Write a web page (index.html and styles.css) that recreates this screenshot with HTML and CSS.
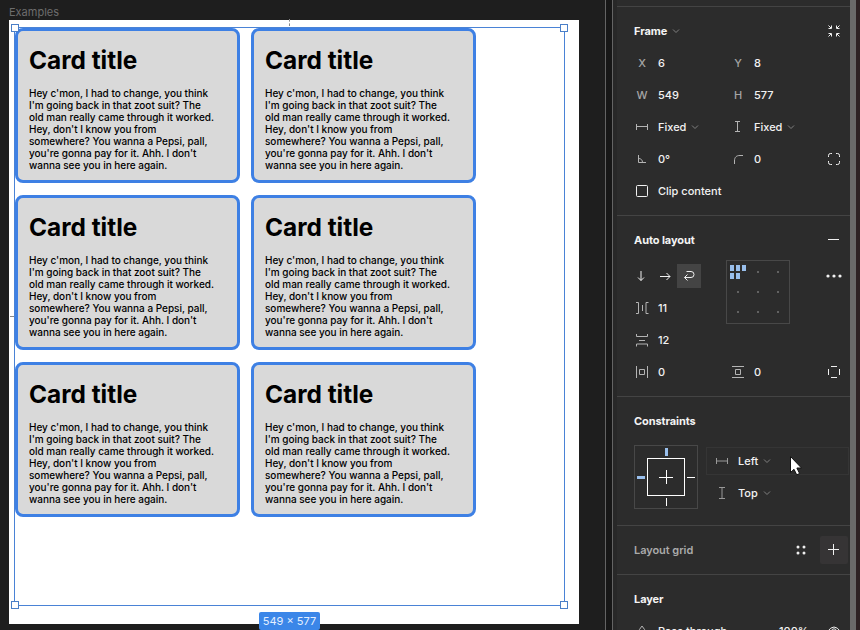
FILE: index.html
```html
<!DOCTYPE html>
<html lang="en">
<head>
<meta charset="utf-8">
<title>Examples</title>
<link rel="stylesheet" href="styles.css">
</head>
<body>
<div class="app">
  <main class="canvas">
    <div class="canvas-label">Examples</div>
    <div class="artboard">
      <div class="frame" id="frame">
        <article class="card"><h2>Card title</h2><p>Hey c'mon, I had to change, you think<br>I'm going back in that zoot suit? The<br>old man really came through it worked.<br>Hey, don't I know you from<br>somewhere? You wanna a Pepsi, pall,<br>you're gonna pay for it. Ahh. I don't<br>wanna see you in here again.</p></article>
        <article class="card"><h2>Card title</h2><p>Hey c'mon, I had to change, you think<br>I'm going back in that zoot suit? The<br>old man really came through it worked.<br>Hey, don't I know you from<br>somewhere? You wanna a Pepsi, pall,<br>you're gonna pay for it. Ahh. I don't<br>wanna see you in here again.</p></article>
        <article class="card"><h2>Card title</h2><p>Hey c'mon, I had to change, you think<br>I'm going back in that zoot suit? The<br>old man really came through it worked.<br>Hey, don't I know you from<br>somewhere? You wanna a Pepsi, pall,<br>you're gonna pay for it. Ahh. I don't<br>wanna see you in here again.</p></article>
        <article class="card"><h2>Card title</h2><p>Hey c'mon, I had to change, you think<br>I'm going back in that zoot suit? The<br>old man really came through it worked.<br>Hey, don't I know you from<br>somewhere? You wanna a Pepsi, pall,<br>you're gonna pay for it. Ahh. I don't<br>wanna see you in here again.</p></article>
        <article class="card"><h2>Card title</h2><p>Hey c'mon, I had to change, you think<br>I'm going back in that zoot suit? The<br>old man really came through it worked.<br>Hey, don't I know you from<br>somewhere? You wanna a Pepsi, pall,<br>you're gonna pay for it. Ahh. I don't<br>wanna see you in here again.</p></article>
        <article class="card"><h2>Card title</h2><p>Hey c'mon, I had to change, you think<br>I'm going back in that zoot suit? The<br>old man really came through it worked.<br>Hey, don't I know you from<br>somewhere? You wanna a Pepsi, pall,<br>you're gonna pay for it. Ahh. I don't<br>wanna see you in here again.</p></article>
        <div class="selection">
          <i class="handle tl"></i><i class="handle tr"></i><i class="handle bl"></i><i class="handle br"></i>
          <span class="size-tag">549 × 577</span>
        </div>
        <i class="guide-top"></i>
        <i class="guide-left"></i>
      </div>
    </div>
  </main>
  <div class="gutter"></div>
  <aside class="panel">
    <div class="panel-top"></div>
    <section>
      <div class="row head">
        <h3>Frame <svg class="chev" width="8" height="6"><path d="M1 1.5l3 3 3-3"/></svg></h3>
        <svg class="icon bright end" width="16" height="16"><path d="M2.500 2.500l2.500 2.500M5.500 2.500v3H2.500M13.500 2.500l-2.500 2.500M10.500 2.500v3H13.500M2.500 13.500l2.500-2.500M5.500 13.500v-3H2.500M13.500 13.500l-2.500-2.500M10.500 13.500v-3H13.500"/></svg>
      </div>
      <div class="row"><div class="cell"><b>X</b><span>6</span></div><div class="cell"><b>Y</b><span>8</span></div></div>
      <div class="row"><div class="cell"><b>W</b><span>549</span></div><div class="cell"><b>H</b><span>577</span></div></div>
      <div class="row">
        <div class="cell"><svg class="icon" width="16" height="16"><path d="M2.500 5v6M13.500 5v6M3 7.500h10"/></svg><span>Fixed</span><svg class="chev" width="8" height="6"><path d="M1 1.500l3 3 3-3"/></svg></div>
        <div class="cell"><svg class="icon" width="16" height="16"><path d="M5 2.500h5M5 12.500h5M7.500 3v10"/></svg><span>Fixed</span><svg class="chev" width="8" height="6"><path d="M1 1.500l3 3 3-3"/></svg></div>
      </div>
      <div class="row">
        <div class="cell"><svg class="icon" width="16" height="16"><path d="M4.500 4v7.500h7.500M4.500 7.500c2.500 0 4 1.500 4 4"/></svg><span>0°</span></div>
        <div class="cell"><svg class="icon" width="16" height="16"><path d="M4.500 13v-3c0-4 2-5.500 5.500-5.500h3"/></svg><span>0</span></div>
        <svg class="icon bright end" width="16" height="16"><path d="M2.500 6V4.500q0-2 2-2H6M10 2.500h1.500q2 0 2 2V6M13.500 10v1.500q0 2-2 2H10M6 13.500H4.500q-2 0-2-2V10"/></svg>
      </div>
      <div class="row"><label class="cell wide"><svg class="icon bright" width="16" height="16"><rect x="2.500" y="2.500" width="11" height="11" rx="1"/></svg><span>Clip content</span></label></div>
    </section>

    <section class="auto">
      <div class="row head"><h3>Auto layout</h3><svg class="icon bright end" width="16" height="16"><path d="M2 7.500h11"/></svg></div>
      <div class="auto-body">
        <div class="auto-left">
          <div class="direction">
            <button><svg class="icon bright" width="16" height="16"><path d="M8 3v9.500M5 9.500l3 3 3-3"/></svg></button>
            <button><svg class="icon bright" width="16" height="16"><path d="M3 8.500h10M9.500 5l3.500 3.500L9.500 12"/></svg></button>
            <button class="on"><svg class="icon bright" width="16" height="16"><path d="M5.500 3.500h4.500a3 3 0 0 1 0 6H3.500M6.500 6.500l-3 3 3 3"/></svg></button>
          </div>
          <div class="row"><div class="cell"><svg class="icon" width="16" height="16"><path d="M2 2.500h2.500v11H2M14.500 2.500H12v11h2.500M8.500 5v6"/></svg><span>11</span></div></div>
          <div class="row"><div class="cell"><svg class="icon" width="16" height="16"><path d="M2.500 2v2.500h11V2M2.500 14.500v-2.500h11v2.500M5 8.500h6"/></svg><span>12</span></div></div>
        </div>
        <svg class="align-box" width="64" height="64">
          <rect class="outline" x=".5" y=".5" width="63" height="63"/>
          <path class="blocks" d="M4 5h4v6h-4zM10 5h4v6h-4zM16 5h4v6h-4zM4 13h4v6h-4zM10 13h4v6h-4z"/>
          <path class="dots" d="M31 11h2v2h-2zM51 11h2v2h-2zM11 31h2v2h-2zM31 31h2v2h-2zM51 31h2v2h-2zM11 51h2v2h-2zM31 51h2v2h-2zM51 51h2v2h-2z"/>
        </svg>
        <svg class="icon more" width="16" height="16"><circle cx="2" cy="8" r="1.600"/><circle cx="8" cy="8" r="1.600"/><circle cx="14" cy="8" r="1.600"/></svg>
      </div>
      <div class="row">
        <div class="cell"><svg class="icon" width="16" height="16"><path d="M2.500 2v12M13.500 2v12M5.500 5.500h5v5h-5z"/></svg><span>0</span></div>
        <div class="cell"><svg class="icon" width="16" height="16"><path d="M2 2.500h12M2 13.500h12M5.500 5.500h5v5h-5z"/></svg><span>0</span></div>
        <svg class="icon bright end" width="16" height="16"><path d="M5 2.500h6M5 13.500h6M2.500 5v6M13.500 5v6"/></svg>
      </div>
    </section>

    <section class="constraints">
      <div class="row head"><h3>Constraints</h3></div>
      <div class="constraint-body">
        <svg class="pin-box" width="64" height="64">
          <rect class="outline" x=".5" y=".5" width="63" height="63"/>
          <rect class="line" x="13.500" y="13.500" width="37" height="37"/>
          <path class="line" d="M25 32.500h14M32.500 25v14M53 32.500h8M32.500 53v8"/>
          <path class="blocks" d="M31 3h3v8h-3zM3 31h8v3H3z"/>
        </svg>
        <div class="selects">
          <div class="field boxed"><svg class="icon dim" width="16" height="16"><path d="M2.500 5v6M13.500 5v6M3 8h10"/></svg><span>Left</span><svg class="chev" width="8" height="6"><path d="M1 1.500l3 3 3-3"/></svg></div>
          <div class="field"><svg class="icon dim" width="16" height="16"><path d="M5 2.500h6M5 13.500h6M8 3v10"/></svg><span>Top</span><svg class="chev" width="8" height="6"><path d="M1 1.500l3 3 3-3"/></svg></div>
        </div>
      </div>
    </section>

    <section class="grid-section">
      <div class="row head"><h3 class="muted">Layout grid</h3>
        <svg class="icon four" width="16" height="16"><circle cx="5" cy="5" r="1.500"/><circle cx="11" cy="5" r="1.500"/><circle cx="5" cy="11" r="1.500"/><circle cx="11" cy="11" r="1.500"/></svg>
        <button class="add"><svg class="icon bright" width="16" height="16"><path d="M2 7.500h11M7.500 2v11"/></svg></button>
      </div>
    </section>

    <section class="layer">
      <div class="row head"><h3>Layer</h3></div>
      <div class="row">
        <div class="cell through"><svg class="icon" width="16" height="16"><path d="M8 3Q4.500 7 4.500 9.500a3.500 3.500 0 0 0 7 0Q11.500 7 8 3z"/></svg><span>Pass through</span></div>
        <span class="opacity">100%</span>
        <svg class="icon bright end" width="16" height="16"><path d="M1.500 8.500q6.500-9 13 0q-6.500 9-13 0z"/><circle cx="8" cy="8" r="2.200"/></svg>
      </div>
    </section>
  </aside>
  <div class="scrollbar"></div>
  <svg class="cursor" width="14" height="22"><path d="M1.500 1.500v16l3.500-3.200 2.700 5.500 2.900-1.300-2.700-5.500h4.600z"/></svg>
</div>
</body>
</html>
```

FILE: styles.css
```css
* { box-sizing: border-box; }
body { margin: 0; font-family: Inter, "Liberation Sans", sans-serif; background: #1e1e1e; }
h2, h3, p { margin: 0; }
button { border: 0; padding: 0; background: none; display: flex; align-items: center; justify-content: center; }
svg { display: block; flex: none; }

.app { position: relative; width: 860px; height: 630px; display: flex; overflow: hidden; }

/* canvas */
.canvas { width: 605px; flex: none; background: #1e1e1e; padding-left: 9px; }
.canvas-label { height: 20px; padding-top: 5px; font-size: 11px; line-height: 15px; color: #6d6d6d; }
.artboard { width: 570px; height: 604px; background: #fff; padding: 8px 0 0 6px; }
.frame { position: relative; width: 549px; height: 577px; display: flex; flex-wrap: wrap; align-content: flex-start; gap: 12px 11px; }
.card { width: 225px; height: 155px; border: 3px solid #3e80e4; border-radius: 8px; background: #d9d9d9; padding: 14px 0 0 11px; color: #000; }
.card h2 { font-size: 24.4px; line-height: 30px; font-weight: 700; white-space: nowrap; }
.card p { margin-top: 12px; font-size: 10px; line-height: 12px; font-weight: 500; letter-spacing: -.02px; white-space: nowrap; }

.selection { position: absolute; inset: -1px; border: 1px solid #4a83d6; }
.handle { position: absolute; width: 8px; height: 8px; background: #fff; border: 1px solid #4a7fc8; }
.tl { left: -4px; top: -4px; }
.tr { right: -4px; top: -4px; }
.bl { left: -4px; bottom: -4px; }
.br { right: -4px; bottom: -4px; }
.size-tag { position: absolute; left: 244px; top: 584px; width: 61px; height: 18px; border-radius: 2px; background: #3b86e8; color: #e4efff; font-size: 11px; line-height: 18px; text-align: center; white-space: nowrap; }
.guide-top { position: absolute; left: 274px; top: -9px; height: 7px; border-left: 1px dashed #888; }
.guide-left { position: absolute; left: -5px; top: 288px; width: 4px; border-top: 1px dashed #888; }

/* inspector */
.gutter { width: 12px; flex: none; background: linear-gradient(to right, #646464 0 1px, #171717 1px 7px, #646464 7px 8px, #282828 8px); }
.panel { width: 233px; flex: none; background: #2c2c2c; color: #f2f2f2; font-size: 11px; font-weight: 500; overflow: hidden; }
.panel-top { height: 6px; }
section { border-top: 1px solid #444; padding: 8px 0 8px 17px; }
.row { display: flex; height: 32px; align-items: center; }
.head h3 { display: flex; align-items: center; gap: 5px; font-size: 11px; font-weight: 700; line-height: 16px; letter-spacing: -.08px; color: #f4f4f4; flex: 1; }
.head h3.muted { font-weight: 600; letter-spacing: -.05px; color: #aaa; }
.cell { width: 96px; flex: none; display: flex; align-items: center; }
.cell.wide { width: 190px; }
.cell b { width: 16px; text-align: center; font-weight: 500; font-size: 11px; color: #a5a5a5; }
.cell span { margin-left: 8px; white-space: nowrap; }
.cell .chev { margin-left: 5px; }
.end { margin-left: auto; margin-right: 8px; }
.icon { fill: none; stroke: #b4b4b4; stroke-width: 1; }
.icon.bright { stroke: #f0f0f0; }
.icon.dim { stroke: #999; }
.chev { fill: none; stroke: #808080; stroke-width: 1; }

.auto-body { display: flex; }
.auto-left { width: 92px; }
.direction { display: flex; width: 72px; height: 36px; padding: 8px 0 4px; margin-left: -5px; }
.direction button { width: 24px; height: 24px; }
.direction .on { background: #444; }
.align-box { margin-top: 4px; }
.outline { fill: none; stroke: #484848; }
.blocks { fill: #99bfec; }
.dots { fill: #626262; }
.icon.more { margin: 12px 8px 0 auto; fill: #f2f2f2; stroke: none; }

.constraint-body { display: flex; gap: 8px; height: 72px; margin-top: 8px; }
.line { fill: none; stroke: #fff; }
.selects { flex: 1; }
.field { height: 32px; display: flex; align-items: center; padding-left: 8px; }
.field span { margin-left: 8px; }
.field .chev { margin-left: 5px; }
.boxed { height: 28px; margin: 2px 1px 2px 0; border: 1px solid #353535; padding-left: 7px; }

.icon.four { fill: #eee; stroke: none; margin-right: 11px; }
.add { width: 28px; height: 28px; background: #363435; border-radius: 2px; margin-right: 2px; }
.through { width: 145px; }
.opacity { white-space: nowrap; }

.scrollbar { width: 10px; flex: none; background: #2e2224; border-left: 6px solid #6b6a6a; }
.cursor { position: absolute; left: 789px; top: 455px; fill: #fff; stroke: #111; stroke-width: 1; }
```
